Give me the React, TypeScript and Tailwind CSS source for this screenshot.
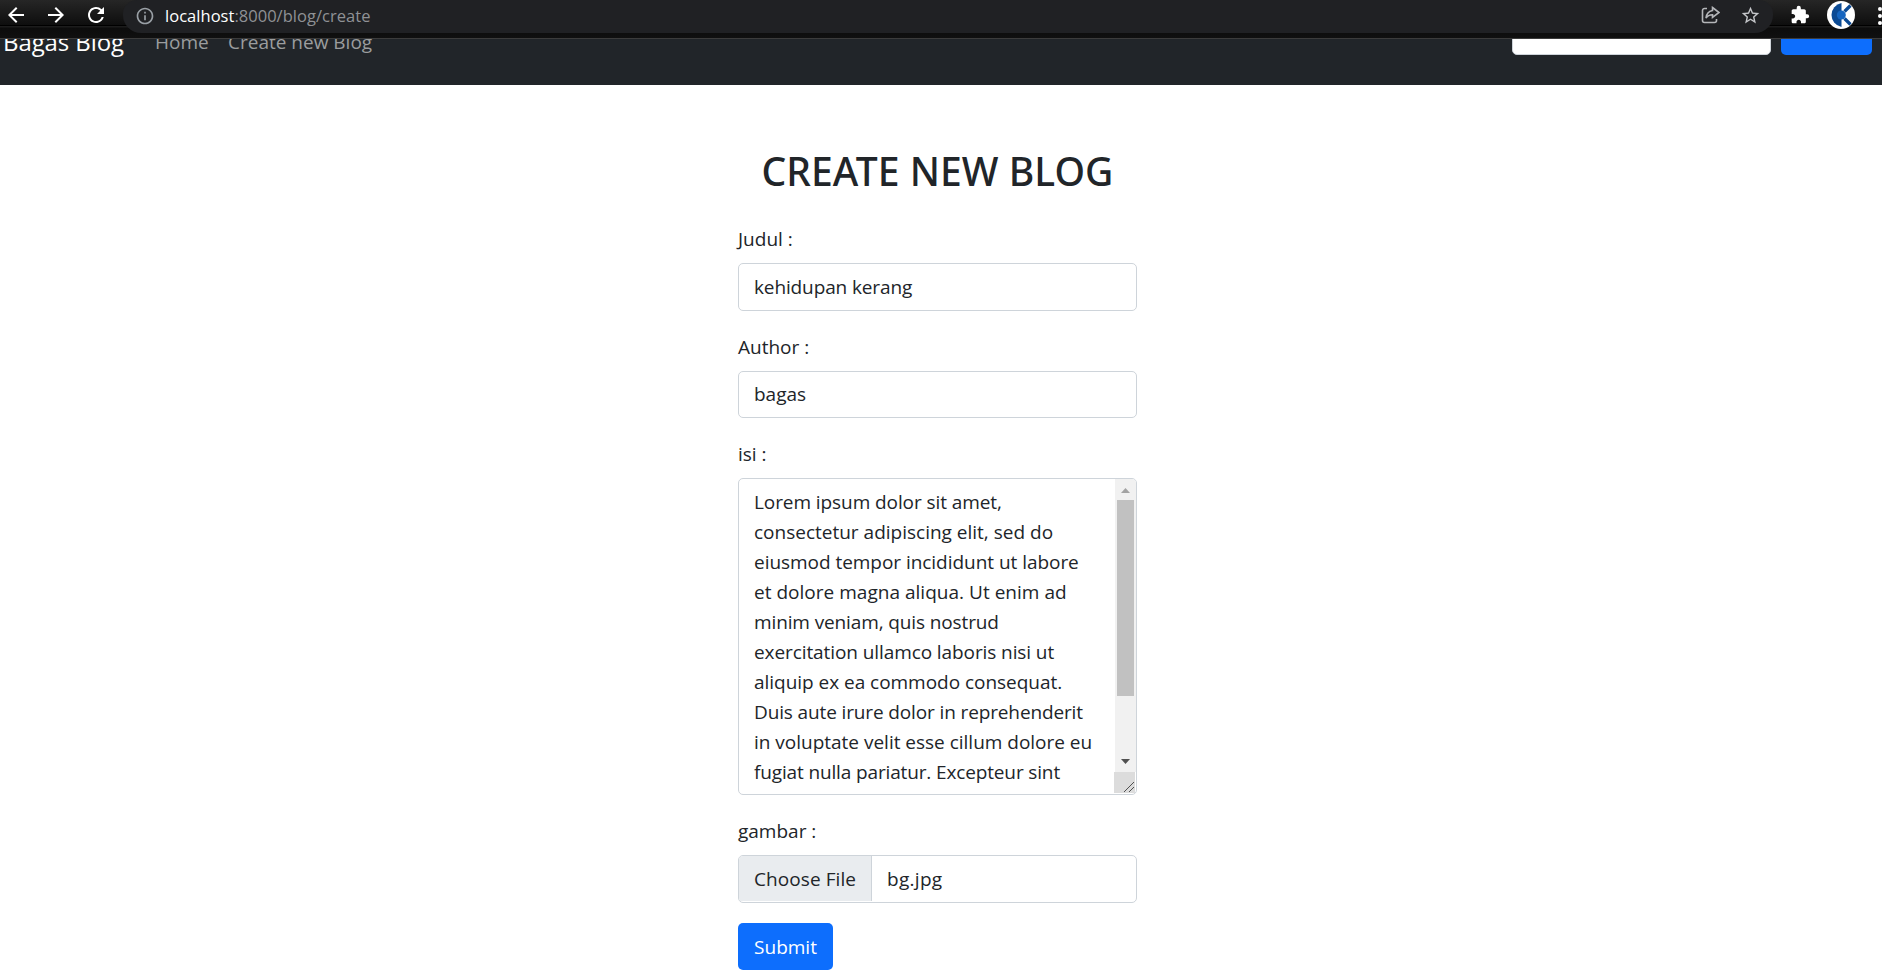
import React, { type ReactNode } from "react";
import { MdArrowBack, MdArrowForward, MdRefresh, MdInfoOutline, MdExtension, MdStarBorder } from "react-icons/md";

function BrowserBar() {
  return (
    <div className="flex h-[39px] items-start border-b border-[#3c3c3c] bg-[linear-gradient(to_bottom,#262626_0px,#0e0e0e_25px,#000_25px,#000_26px,#1c1c1c_26px,#1c1c1c_27px,#0c0c0c_28px,#101010_38px)]">
      <div className="flex w-[123px] shrink-0 items-center gap-4 pt-[3px] pl-[3.500px] text-white">
        <MdArrowBack className="size-6" />
        <MdArrowForward className="size-6" />
        <MdRefresh className="size-6" />
      </div>
      <div className="flex h-[33px] w-[1650px] shrink-0 items-start rounded-t-[14px] rounded-b-[18px] bg-[#202124] pl-[12px] font-['Open_Sans',sans-serif] text-[16.5px] leading-[31px] tracking-[0.03px]">
        <MdInfoOutline className="mt-[6px] size-5 text-[#9aa0a6]" />
        <span className="ml-[10px] text-white">localhost</span>
        <span className="text-[#8f9195]">:8000/blog/create</span>
        <div className="ml-auto flex gap-[20px] pt-[5px] pr-[12px]">
          <svg viewBox="0 0 20 20" className="size-5 fill-none stroke-[#b4b6b9] stroke-[1.6]">
            <path d="M7 3.500H4.500a2 2 0 0 0-2 2v10a2 2 0 0 0 2 2h10a2 2 0 0 0 2-2V14" />
            <path d="M12.500 2.500 19 7.500l-6.500 5V9.700c-3 0-5 .9-6.500 3.300.4-4 2.500-6.700 6.500-7.500z" />
          </svg>
          <MdStarBorder className="size-[21px] text-[#c4c6c9]" />
        </div>
      </div>
      <div className="flex w-[109px] items-start overflow-hidden pl-[17px]">
        <MdExtension className="mt-[5px] size-5 shrink-0 text-white" />
        <svg viewBox="0 0 28 28" className="mt-[1px] ml-[17px] size-7 shrink-0">
          <circle cx="14" cy="14" r="14" fill="#fff" />
          <path d="M14.500 2A12.200 12.200 0 0 0 14.500 26z" fill="#0b4a94" />
          <path d="m17.500 10.500 6-6M17.500 17.500l6 6" stroke="#0b4a94" strokeWidth="3.200" />
          <circle cx="14.300" cy="14" r="4.500" fill="#1565c0" />
        </svg>
        <div className="mt-[7px] ml-[23px] flex flex-col gap-[3px]">
          <i className="size-[4px] rounded-full bg-white" />
          <i className="size-[4px] rounded-full bg-white" />
          <i className="size-[4px] rounded-full bg-white" />
        </div>
      </div>
    </div>
  );
}

function Navbar() {
  return (
    <nav className="flex h-[46px] items-start overflow-hidden bg-[#212529]">
      <a className="-mt-[15px] ml-[3px] w-[152px] text-[24px] leading-[36px] tracking-[-0.1px] whitespace-nowrap text-white">Bagas Blog</a>
      <a className="-mt-[12px] w-[73px] leading-[30px] text-[#9b9d9e]">Home</a>
      <a className="-mt-[12px] leading-[30px] whitespace-nowrap text-[#9b9d9e]">Create new Blog</a>
      <div className="mt-[-32px] mr-[10px] ml-auto flex gap-[10px]">
        <div className="h-12 w-[259px] rounded-[5px] border border-[#ced4da] bg-white" />
        <div className="h-12 w-[91px] rounded-[5px] bg-[#0d6efd]" />
      </div>
    </nav>
  );
}

function Field({ label, children }: { label: string; children: ReactNode }) {
  return (
    <div className="mb-[20px]">
      <label className="mb-[9px] block pt-px leading-[30px]">{label}</label>
      {children}
    </div>
  );
}

const inputClass =
  "block h-[47.500px] w-full rounded-[5px] border border-[#ced4da] bg-white px-[15px] leading-[30px] outline-none";

function BodyText() {
  return (
    <div className="flex h-[317px] rounded-[5px] border border-[#ced4da] bg-white">
      <div className="flex-1 pt-[8px] pl-[15px] leading-[30px] whitespace-nowrap">
        <p className="tracking-[-0.08px]">Lorem ipsum dolor sit amet,</p>
        <p>consectetur adipiscing elit, sed do</p>
        <p className="tracking-[-0.04px]">eiusmod tempor incididunt ut labore</p>
        <p className="tracking-[0.02px]">et dolore magna aliqua. Ut enim ad</p>
        <p className="tracking-[-0.12px]">minim veniam, quis nostrud</p>
        <p className="tracking-[-0.09px]">exercitation ullamco laboris nisi ut</p>
        <p className="tracking-[-0.03px]">aliquip ex ea commodo consequat.</p>
        <p className="tracking-[-0.13px]">Duis aute irure dolor in reprehenderit</p>
        <p className="tracking-[-0.01px]">in voluptate velit esse cillum dolore eu</p>
        <p className="tracking-[-0.14px]">fugiat nulla pariatur. Excepteur sint</p>
      </div>
      <div className="flex w-[22px] flex-col items-end">
        <div className="flex h-[293px] w-[21px] flex-col items-center rounded-tr-[4px] bg-[#f1f1f1] pr-px">
          <svg viewBox="0 0 9 5" className="mt-[9px] h-[5px] w-[9px] fill-[#a3a3a3]"><path d="M0 5 4.500 0 9 5z" /></svg>
          <div className="mt-[7px] h-[196px] w-[17px] bg-[#c1c1c1]" />
          <svg viewBox="0 0 9 5" className="mt-[63px] h-[5px] w-[9px] fill-[#505050]"><path d="M0 0h9L4.500 5z" /></svg>
        </div>
        <div className="mr-px h-[21px] w-[21px] bg-[#dcdcdc]">
          <svg viewBox="0 0 21 21" className="size-[21px] fill-none stroke-[#505050]"><path d="m10 20 10-10M15 20l5-5" /></svg>
        </div>
      </div>
    </div>
  );
}

export default function App() {
  return (
    <div className="h-[976px] overflow-hidden bg-white font-['Open_Sans',sans-serif] text-[19px] text-[#212529]">
      <BrowserBar />
      <Navbar />
      <main className="ml-[738px] w-[399px] pt-[62px]">
        <h1 className="mb-[18px] text-center font-['Noto_Sans',sans-serif] text-[39px] leading-[48px] font-medium tracking-[0.06px] whitespace-nowrap">CREATE NEW BLOG</h1>
        <form className="pt-[10px]">
          <Field label="Judul :">
            <input className={`${inputClass} tracking-[-0.12px]`} defaultValue="kehidupan kerang" />
          </Field>
          <Field label="Author :">
            <input className={inputClass} defaultValue="bagas" />
          </Field>
          <Field label="isi :">
            <BodyText />
          </Field>
          <Field label="gambar :">
            <div className="flex h-[47.500px] overflow-hidden rounded-[5px] border border-[#ced4da] leading-[47px]">
              <span className="mb-px w-[133px] border-r border-[#ced4da] bg-[#e9ecef] pl-[15px] tracking-[0.08px]">Choose File</span>
              <span className="pl-[15px] tracking-[0.3px]">bg.jpg</span>
            </div>
          </Field>
          <button type="button" className="h-[47px] w-[95px] rounded-[5px] bg-[#0d6efd] pt-px leading-[46px] text-white">Submit</button>
        </form>
      </main>
    </div>
  );
}
